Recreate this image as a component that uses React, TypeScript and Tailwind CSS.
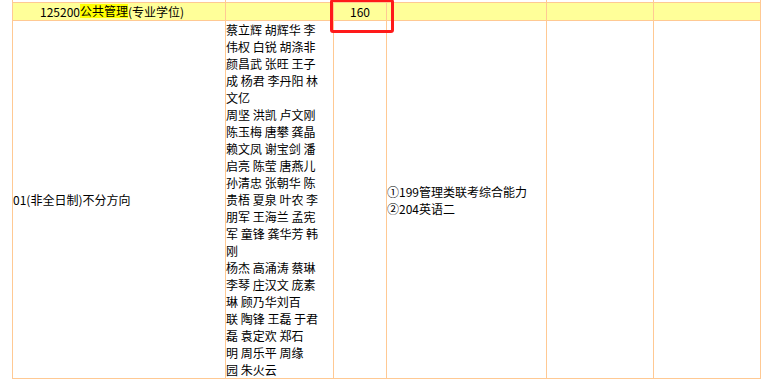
const names: string[] = [
  "蔡立辉 胡辉华 李",
  "伟权 白锐 胡涤非",
  "颜昌武 张旺 王子",
  "成 杨君 李丹阳 林",
  "文亿",
  "周坚 洪凯 卢文刚",
  "陈玉梅 唐攀 龚晶",
  "赖文凤 谢宝剑 潘",
  "启亮 陈莹 唐燕儿",
  "孙清忠 张朝华 陈",
  "贵梧 夏泉 叶农 李",
  "朋军 王海兰 孟宪",
  "军 童锋 龚华芳 韩",
  "刚",
  "杨杰 高涌涛 蔡琳",
  "李琴 庄汉文 庞素",
  "琳 顾乃华刘百",
  "联 陶锋 王磊 于君",
  "磊 袁定欢 郑石",
  "明 周乐平 周缘",
  "园 朱火云",
];

const cols = "grid grid-cols-[213px_108px_53px_160px_107px_107px]";
const cell = "border-r border-[#ffc993]";

export default function App() {
  return (
    <div className="relative w-[777px] h-[385px] overflow-hidden bg-white text-black text-[12px] leading-[17px] font-['Noto_Sans_CJK_SC',sans-serif]">
      <div className="ml-[12px] w-[749px] border-l border-[#ffc993]">
        {/* tail of the row above */}
        <div className={`${cols} h-[2px]`}>
          {[0, 1, 2, 3, 4, 5].map((i) => (
            <div key={i} className={cell} />
          ))}
        </div>

        {/* major row */}
        <div className={`${cols} h-[19px] bg-[#ffff99] border-y border-[#ffc993]`}>
          <div className={`${cell} pl-[27px] whitespace-nowrap`}>
            125200
            <span className="inline-block bg-[#ffff00] leading-[14px] align-[1px]">公共管理</span>
            (专业学位)
          </div>
          <div className={cell} />
          <div className={`${cell} text-center`}>160</div>
          <div className={cell} />
          <div className={cell} />
          <div className={cell} />
        </div>

        {/* direction row */}
        <div className={`${cols} border-b border-[#ffc993]`}>
          <div className={`${cell} flex items-center whitespace-nowrap`}>01(非全日制)不分方向</div>
          <div className={cell}>
            {names.map((n, i) => (
              <div key={i} className="whitespace-nowrap">
                {n}
              </div>
            ))}
          </div>
          <div className={cell} />
          <div className={`${cell} flex flex-col justify-center`}>
            <div>①199管理类联考综合能力</div>
            <div>②204英语二</div>
          </div>
          <div className={cell} />
          <div className={cell} />
        </div>
      </div>

      {/* red annotation box */}
      <div className="absolute left-[330px] top-[-1px] w-[64px] h-[34px] border-[3px] border-[#ff1a1a] rounded-[3px]" />
    </div>
  );
}
